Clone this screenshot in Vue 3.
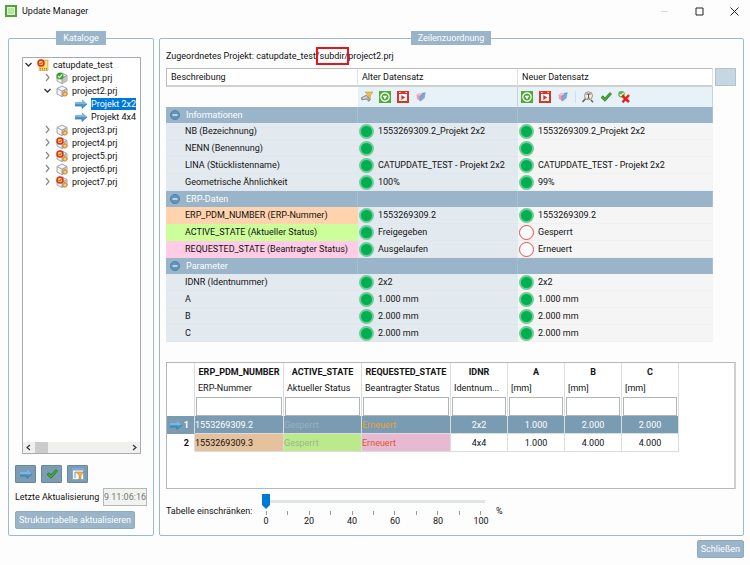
<script setup>
    import {ref} from "vue";

    const tree = ref([
        {name:"catupdate_test", icon:"catalog", level:0, state:"open"},
        {name:"project.prj", icon:"cube-ok", level:1, state:"closed"},
        {name:"project2.prj", icon:"cube-edit", level:1, state:"open"},
        {name:"Projekt 2x2", icon:"arrow", level:2},
        {name:"Projekt 4x4", icon:"arrow", level:2},
        {name:"project3.prj", icon:"cube-edit", level:1, state:"closed"},
        {name:"project4.prj", icon:"cube-error", level:1, state:"closed"},
        {name:"project5.prj", icon:"cube-error", level:1, state:"closed"},
        {name:"project6.prj", icon:"cube-edit", level:1, state:"closed"},
        {name:"project7.prj", icon:"cube-error", level:1, state:"closed"}
    ]);
    const selected = ref("Projekt 2x2");

    const oldTools = ["pen-filter", "target", "play", "cube-color"];
    const newTools = ["target", "play", "cube-color", "", "search", "check", "check-x"];

    const sections = ref([
        {title:"Informationen", open:true, rows:[
            {label:"NB (Bezeichnung)", old:"1553269309.2_Projekt 2x2", new:"1553269309.2_Projekt 2x2"},
            {label:"NENN (Benennung)", old:"", new:""},
            {label:"LINA (Stücklistenname)", old:"CATUPDATE_TEST - Projekt 2x2", new:"CATUPDATE_TEST - Projekt 2x2"},
            {label:"Geometrische Ähnlichkeit", old:"100%", new:"99%"}
        ]},
        {title:"ERP-Daten", open:true, rows:[
            {label:"ERP_PDM_NUMBER (ERP-Nummer)", old:"1553269309.2", new:"1553269309.2", color:"orange"},
            {label:"ACTIVE_STATE (Aktueller Status)", old:"Freigegeben", new:"Gesperrt", color:"green", changed:true},
            {label:"REQUESTED_STATE (Beantragter Status)", old:"Ausgelaufen", new:"Erneuert", color:"pink", changed:true}
        ]},
        {title:"Parameter", open:true, rows:[
            {label:"IDNR (Identnummer)", old:"2x2", new:"2x2"},
            {label:"A", old:"1.000 mm", new:"1.000 mm"},
            {label:"B", old:"2.000 mm", new:"2.000 mm"},
            {label:"C", old:"2.000 mm", new:"2.000 mm"}
        ]}
    ]);

    const columns = [
        {key:"erp", name:"ERP_PDM_NUMBER", sub:"ERP-Nummer"},
        {key:"active", name:"ACTIVE_STATE", sub:"Aktueller Status"},
        {key:"requested", name:"REQUESTED_STATE", sub:"Beantragter Status"},
        {key:"idnr", name:"IDNR", sub:"Identnum..."},
        {key:"a", name:"A", sub:"[mm]"},
        {key:"b", name:"B", sub:"[mm]"},
        {key:"c", name:"C", sub:"[mm]"}
    ];
    const records = [
        {erp:"1553269309.2", active:"Gesperrt", requested:"Erneuert", idnr:"2x2", a:"1.000", b:"2.000", c:"2.000"},
        {erp:"1553269309.3", active:"Gesperrt", requested:"Erneuert", idnr:"4x4", a:"1.000", b:"4.000", c:"4.000"}
    ];
    const filters = ref({});
    const current = ref(0);
    const limit = ref(0);
    const updated = ref("9 11:06:16");
</script>

<template>
    <svg class="symbols" aria-hidden="true">
        <symbol id="check" viewBox="0 0 12 12">
            <path d="M1 6.5 3 4.8 4.8 7 10 1.5 11.5 3 5 10.3z" fill="#3fae2a" stroke="#1d6b12" stroke-width=".7"/>
        </symbol>
        <symbol id="cube" viewBox="0 0 12 12">
            <path d="M6 1 11 3.5V9L6 11.6 1 9V3.5z" fill="#f4f4f4" stroke="#8d8d8d" stroke-width=".8"/>
            <path d="M6 6.2 11 3.5V9L6 11.6z" fill="#c3c3c3"/>
            <path d="M1 3.5 6 6.2 11 3.5M6 6.2v5.2" fill="none" stroke="#8d8d8d" stroke-width=".8"/>
        </symbol>
        <symbol id="gear" viewBox="0 0 12 12">
            <circle cx="6" cy="6" r="4.4" fill="#f3a73e" stroke="#cc7420" stroke-width="2" stroke-dasharray="1.8 1"/>
            <circle cx="6" cy="6" r="1.6" fill="#fff3d5"/>
        </symbol>
        <symbol id="error" viewBox="0 0 12 12">
            <circle cx="6" cy="6" r="4.5" fill="#f6d254" stroke="#d92c1a" stroke-width="2.2"/>
            <path d="m3.8 6 1.7 1.7L8.6 4" fill="none" stroke="#d92c1a" stroke-width="1.5"/>
        </symbol>
        <symbol id="cube-edit" viewBox="0 0 12 12">
            <use href="#cube"/>
            <use href="#gear" x="6" y="6" width="6" height="6"/>
        </symbol>
        <symbol id="cube-error" viewBox="0 0 12 12">
            <use href="#cube"/>
            <use href="#error" width="8" height="8"/>
            <use href="#gear" x="6" y="6" width="6" height="6"/>
        </symbol>
        <symbol id="cube-ok" viewBox="0 0 12 12">
            <use href="#cube"/>
            <circle cx="4" cy="4" r="3.6" fill="#35a32b"/>
            <path d="m2 4 1.5 1.6L6.2 2.4" fill="none" stroke="#fff" stroke-width="1.2"/>
        </symbol>
        <symbol id="catalog" viewBox="0 0 12 12">
            <path d="M2 1h9v10.5H2z" fill="#f3d26a" stroke="#d0a441" stroke-width=".6"/>
            <path d="M3 9.5h7M3 11h7" stroke="#9d7424" stroke-width=".8" stroke-dasharray="1 1"/>
            <use href="#error" width="8" height="8"/>
            <path d="M9 2v7" stroke="#fff0bd"/>
        </symbol>
        <symbol id="arrow" viewBox="0 0 12 12">
            <path d="M0 4h7V1.6L12 6l-5 4.4V8H0z" fill="#4f9acb"/>
            <path d="M0 4h7V1.6L12 6H0z" fill="#79b9dd"/>
            <path d="M0 8h7v2.4L12 6" fill="none" stroke="#2f6f9f" stroke-width=".7"/>
        </symbol>
        <symbol id="pen-filter" viewBox="0 0 12 12">
            <path d="M4 1h8L9.3 4.5V9l-2 1.5v-6z" fill="#f2bf4b" stroke="#bd8629" stroke-width=".5"/>
            <path d="m0 7 5.5-3L9 8.8 8 10 5 8 1 9z" fill="#b1b4b5" stroke="#686c6e" stroke-width=".6"/>
            <path d="m2 7.5 4-1.6" stroke="#eee" stroke-width=".8"/>
        </symbol>
        <symbol id="target" viewBox="0 0 12 12">
            <path d="M0 0h12v12H0z" fill="#51a838"/>
            <circle cx="6" cy="6" r="4.2" fill="none" stroke="#fff" stroke-width="1.2"/>
            <path d="M3.8 4.7h4.4L6 8.5z" fill="#fff"/>
        </symbol>
        <symbol id="play" viewBox="0 0 12 12">
            <path d="M0 0h12v12H0z" fill="#dc3326"/>
            <path d="M2 3h8v7H2z" fill="#fff"/>
            <path d="M4.3 4v5l4-2.5z" fill="#dc3326"/>
            <path d="M2 1.5h1.5M8.5 1.5H10" stroke="#fff"/>
        </symbol>
        <symbol id="cube-color" viewBox="0 0 12 12">
            <path d="m1.5 3.5 4-1.8 1.5 4L5.5 10 2 8z" fill="#ed9db1"/>
            <path d="m5 2.3 5.5-1L9.7 7 5.5 10.5z" fill="#81a5dd"/>
            <path d="m1.5 3.5 4-1.8L8 3.3 5 5z" fill="#f4c3ca"/>
            <path d="M5 5v5.3M5 5l5.3-3" stroke="#687ebb" stroke-width=".6"/>
        </symbol>
        <symbol id="search" viewBox="0 0 12 12">
            <circle cx="6.5" cy="4.8" r="4" fill="#eef0ed" stroke="#a88c72" stroke-width="1"/>
            <path d="M4.4 3h4.4M6.6 3v4M5.5 7.2h2.2" fill="none" stroke="#555" stroke-width="1"/>
            <path d="m3.5 7.7-3 3.3M9 9l2 2.2" stroke="#6c625a" stroke-width="1.6"/>
        </symbol>
        <symbol id="check-x" viewBox="0 0 12 12">
            <circle cx="3.5" cy="3.3" r="3.3" fill="#63b44b"/>
            <path d="m1.7 3.3 1.4 1.4 2.4-2.9" fill="none" stroke="#fff" stroke-width="1.1"/>
            <path d="m4 4.5 7 6.5M11 4l-6.5 7.3" stroke="#ed1c14" stroke-width="2.4"/>
        </symbol>
        <symbol id="window-filter" viewBox="0 0 12 12">
            <path d="M.5.5h11v11H.5z" fill="#f7f9fb" stroke="#8aa9cb"/>
            <path d="M.5.5h11v2H.5z" fill="#78a6de"/>
            <path d="M2 5h2M2 7h2M2 9h2" stroke="#6094d0"/>
            <path d="M3.5 4H12L9 7v3.5L7 12V7z" fill="#edb63e" stroke="#a8741f" stroke-width=".5"/>
        </symbol>
        <symbol id="logo" viewBox="0 0 12 12">
            <path d="M0 0h12v12H0z" fill="#4ca72e"/>
            <path d="M2 2h8v8H2z" fill="#e3f3da"/>
            <path d="M3 4h6M3 6h6M3 8h6" stroke="#83c169" stroke-width=".8"/>
        </symbol>
        <symbol id="minus" viewBox="0 0 12 12">
            <circle cx="6" cy="6" r="5.5" fill="#6094b8" stroke="#477fa6"/>
            <path d="M3 6h6" stroke="#e9f3f9" stroke-width="1.6"/>
        </symbol>
    </svg>

    <div class="window">
        <header class="titlebar">
            <svg class="icon"><use href="#logo"/></svg>
            <h1>Update Manager</h1>
            <div class="window-buttons">
                <button type="button" aria-label="Minimieren"><svg viewBox="0 0 9 9"><path d="M1 4.5h7" stroke="#d5ddd8"/></svg></button>
                <button type="button" aria-label="Maximieren"><svg viewBox="0 0 9 9"><path d="M1 1h7v7H1z" fill="none" stroke="#222"/></svg></button>
                <button type="button" aria-label="Fenster schließen"><svg viewBox="0 0 9 9"><path d="m.5.5 8 8m0-8-8 8" stroke="#222"/></svg></button>
            </div>
        </header>

        <main>
            <fieldset class="catalogs">
                <legend>Kataloge</legend>
                <div class="tree">
                    <ul>
                        <li v-for="node in tree" :key="node.name" :class="'level-' + node.level">
                            <span class="chevron">
                                <svg v-if="node.state == 'open'" viewBox="0 0 9 9"><path d="m1.5 3 3 3 3-3" fill="none" stroke="#333" stroke-width="1.3"/></svg>
                                <svg v-else-if="node.state" viewBox="0 0 9 9"><path d="m3 1 3 3.5L3 8" fill="none" stroke="#888" stroke-width="1.2"/></svg>
                            </span>
                            <svg class="icon"><use :href="'#' + node.icon"/></svg>
                            <button type="button" :class="{selected: selected == node.name}" @click="selected = node.name">{{ node.name }}</button>
                        </li>
                    </ul>
                    <div class="scrollbar">
                        <svg viewBox="0 0 9 9"><path d="m6 2-3 2.5L6 7" fill="none" stroke="#333" stroke-width="1.2"/></svg>
                        <span class="scroll-thumb"></span>
                        <svg viewBox="0 0 9 9"><path d="m3 2 3 2.5L3 7" fill="none" stroke="#333" stroke-width="1.2"/></svg>
                    </div>
                </div>
                <div class="actions">
                    <button type="button" aria-label="Zuordnen"><svg class="icon"><use href="#arrow"/></svg></button>
                    <button type="button" aria-label="Übernehmen"><svg class="icon"><use href="#check"/></svg></button>
                    <button type="button" aria-label="Filtern"><svg class="icon"><use href="#window-filter"/></svg></button>
                </div>
                <div class="updated">
                    <label for="updated">Letzte Aktualisierung</label>
                    <input id="updated" type="text" v-model="updated" readonly/>
                </div>
                <button type="button" class="button">Strukturtabelle aktualisieren</button>
            </fieldset>

            <fieldset class="mapping">
                <legend>Zeilenzuordnung</legend>
                <p class="project">Zugeordnetes Projekt: catupdate_test/<span class="marked">subdir</span>/project2.prj</p>

                <div class="compare-wrapper">
                    <table class="compare">
                        <colgroup>
                            <col class="col-label"/>
                            <col class="col-old"/>
                            <col/>
                        </colgroup>
                        <thead>
                            <tr>
                                <th>Beschreibung</th>
                                <th>Alter Datensatz</th>
                                <th>Neuer Datensatz</th>
                            </tr>
                            <tr class="tools">
                                <td></td>
                                <td v-for="(tools, i) in [oldTools, newTools]" :key="i">
                                    <div class="tool-list">
                                        <template v-for="tool in tools" :key="tool">
                                            <button type="button" v-if="tool" :aria-label="tool"><svg class="icon"><use :href="'#' + tool"/></svg></button>
                                            <span class="separator" v-else></span>
                                        </template>
                                    </div>
                                </td>
                            </tr>
                        </thead>
                        <tbody v-for="section in sections" :key="section.title">
                            <tr class="section">
                                <th>
                                    <button type="button" @click="section.open = !section.open">
                                        <svg><use href="#minus"/></svg>{{ section.title }}
                                    </button>
                                </th>
                                <td></td>
                                <td></td>
                            </tr>
                            <template v-if="section.open">
                                <tr v-for="row in section.rows" :key="row.label">
                                    <th :class="row.color">{{ row.label }}</th>
                                    <td><div class="value"><span class="dot"></span>{{ row.old }}</div></td>
                                    <td class="new"><div class="value"><span class="dot" :class="{changed: row.changed}"></span>{{ row.new }}</div></td>
                                </tr>
                            </template>
                        </tbody>
                    </table>
                    <button type="button" class="corner" aria-label="Spalten"></button>
                </div>

                <div class="records">
                    <table>
                        <colgroup>
                            <col class="col-number"/>
                            <col v-for="column in columns" :key="column.key" :class="'col-' + column.key"/>
                        </colgroup>
                        <thead>
                            <tr class="names">
                                <td></td>
                                <th v-for="column in columns" :key="column.key">{{ column.name }}</th>
                            </tr>
                            <tr class="subs">
                                <td></td>
                                <td v-for="column in columns" :key="column.key">{{ column.sub }}</td>
                            </tr>
                            <tr class="filters">
                                <td></td>
                                <td v-for="column in columns" :key="column.key"><input type="text" :aria-label="column.name" v-model="filters[column.key]"/></td>
                            </tr>
                        </thead>
                        <tbody>
                            <tr v-for="(record, i) in records" :key="record.erp" :class="{current: current == i}" @click="current = i">
                                <th>
                                    <div class="number"><svg class="icon" v-if="current == i"><use href="#arrow"/></svg>{{ i + 1 }}</div>
                                </th>
                                <td v-for="column in columns" :key="column.key" :class="column.key">{{ record[column.key] }}</td>
                            </tr>
                        </tbody>
                    </table>
                </div>

                <div class="limit">
                    <label for="limit">Tabelle einschränken:</label>
                    <div class="slider">
                        <input id="limit" type="range" min="0" max="100" v-model="limit"/>
                        <div class="ticks"><i v-for="n in 11" :key="n"></i></div>
                        <div class="scale"><span v-for="n in 6" :key="n">{{ (n - 1) * 20 }}</span></div>
                    </div>
                    <span>%</span>
                </div>
            </fieldset>
        </main>

        <footer>
            <button type="button" class="button">Schließen</button>
        </footer>
    </div>
</template>

<style>
    body{
        margin:0;
        background:#fdfdfd;
    }
</style>

<style scoped>
    *{
        box-sizing:border-box;
    }
    .symbols{
        position:absolute;
        width:0;
        height:0;
    }
    .window{
        display:flex;
        flex-direction:column;
        min-height:100vh;
        padding:0 6px 7px 8px;
        font-family:Roboto, "Open Sans", sans-serif;
        font-size:9px;
        line-height:14px;
        color:#111;
    }
    button, input{
        font:inherit;
        color:inherit;
        margin:0;
        padding:0;
        border:0;
        background:none;
    }
    svg{
        display:block;
        flex:none;
    }
    .icon{
        width:12px;
        height:12px;
    }
    .titlebar{
        display:flex;
        align-items:center;
        height:22px;
        margin:0 0 9px -3px;
    }
    h1{
        flex:1;
        margin:0 0 0 5px;
        font-size:9px;
        font-weight:normal;
    }
    .window-buttons{
        display:flex;
        gap:26px;
        padding-right:5px;
    }
    .window-buttons button, .window-buttons svg{
        width:9px;
        height:9px;
    }
    main{
        display:flex;
        flex:1;
        gap:5px;
    }
    fieldset{
        display:flex;
        flex-direction:column;
        min-width:0;
        margin:0;
        border:1px solid #9db9cc;
        border-radius:2px;
    }
    legend{
        margin:0 auto;
        padding:0 7px;
        background:#9ab4c9;
        color:#fff;
    }
    .catalogs{
        flex:0 0 146px;
        padding:12px 6px 6px;
    }
    .mapping{
        flex:1;
        padding:2px 7px 7px 6px;
    }
    .tree{
        display:flex;
        flex-direction:column;
        flex:1;
        margin:0 6px 11px 7px;
        border:1px solid #a5abb0;
        background:#fff;
    }
    ul{
        flex:1;
        margin:0;
        padding:0;
        list-style:none;
    }
    li{
        display:flex;
        align-items:center;
        gap:4px;
        height:13px;
        padding-left:1px;
    }
    li button{
        line-height:12px;
        white-space:nowrap;
    }
    .level-1{
        padding-left:20px;
    }
    .level-2{
        padding-left:39px;
    }
    .selected{
        background:#0078d7;
        color:#fff;
    }
    .chevron, .chevron svg{
        width:9px;
        height:9px;
    }
    .scrollbar{
        display:flex;
        align-items:center;
        gap:2px;
        height:11px;
        padding:0 1px;
        background:#f0f1ee;
    }
    .scrollbar svg{
        width:9px;
        height:9px;
    }
    .scroll-thumb{
        width:13px;
        height:11px;
        margin-right:auto;
        background:#cbcbcb;
    }
    .actions{
        display:flex;
        gap:5px;
    }
    .actions button{
        display:flex;
        align-items:center;
        justify-content:center;
        width:21px;
        height:18px;
        border:1px solid #6789a0;
        border-radius:1px;
        background:#7b9cb2;
    }
    .updated{
        display:flex;
        align-items:center;
        justify-content:space-between;
        margin:5px 0;
        white-space:nowrap;
    }
    .updated input{
        width:44px;
        height:18px;
        border:1px solid #b4b8b8;
        background:#f1f3f0;
        color:#777;
    }
    .button{
        align-self:flex-start;
        height:18px;
        padding:0 3px;
        border:1px solid #8faabf;
        border-radius:2px;
        background:#9ab4c9;
        color:#fff;
        white-space:nowrap;
    }
    .project{
        margin:0 0 3px;
        line-height:18px;
    }
    .marked{
        position:relative;
    }
    .marked::after{
        content:"";
        position:absolute;
        inset:-4px;
        border:2px solid #e8141c;
    }
    table{
        border-collapse:separate;
        border-spacing:0;
        table-layout:fixed;
    }
    th, td{
        padding:0;
        font-weight:normal;
        text-align:left;
        white-space:nowrap;
    }
    .compare-wrapper{
        display:flex;
        align-items:flex-start;
        gap:2px;
        margin-bottom:20px;
    }
    .compare{
        flex:1;
        min-width:0;
        width:0;
    }
    .col-label{
        width:192px;
    }
    .col-old{
        width:160px;
    }
    .compare thead th{
        height:19px;
        padding-left:4px;
        border:1px solid #b8bcbd;
        border-width:1px 1px 2px 0;
        border-right-color:#dde2e4;
        border-bottom-color:#cfd1d1;
        background:#fff;
    }
    .compare thead th:first-child{
        border-left-width:1px;
    }
    .tools td{
        height:20px;
    }
    .tools td + td{
        border-right:1px solid #c9d3d8;
        background:#e6f2f7;
    }
    .tool-list{
        display:flex;
        align-items:center;
        gap:6px;
        padding-left:3px;
    }
    .separator{
        width:1px;
        height:12px;
        background:#d5dfe3;
    }
    .compare tbody th, .compare tbody td{
        height:17px;
        border-bottom:1px solid #dfe7ec;
        background:#e3eaef;
    }
    .compare tbody th{
        padding-left:19px;
    }
    .compare tbody .new{
        border-bottom-color:#eef1ee;
        background:#f4f5f4;
    }
    .compare .section th, .compare .section td{
        height:16px;
        border:0;
        border-right:1px solid #a8bfd0;
        background:#9ab4c9;
    }
    .compare .section th{
        padding-left:4px;
    }
    .section button{
        display:flex;
        align-items:center;
        gap:6px;
        color:#fff;
    }
    .section svg{
        width:10px;
        height:10px;
    }
    .compare tbody .orange{
        border-color:#ffd3ae;
        background:#ffd3ae;
    }
    .compare tbody .green{
        border-color:#ccff99;
        background:#ccff99;
    }
    .compare tbody .pink{
        border-color:#ffcce6;
        background:#ffcce6;
    }
    .value{
        display:flex;
        align-items:center;
        gap:4px;
        padding-left:1px;
    }
    .dot{
        width:15px;
        height:15px;
        border:2px solid #6fcb98;
        border-radius:50%;
        background:#00b050;
    }
    .dot.changed{
        border:1px solid #f04848;
        background:#fff;
    }
    .corner{
        width:21px;
        height:18px;
        border:1px solid #b5c1c9;
        background:#c5d7e2;
    }
    .records{
        min-height:127px;
        margin-bottom:5px;
        border:1px solid #b5b8ba;
        border-right:2px solid #cfd1d1;
        background:#fff;
    }
    .records th, .records td{
        border-right:1px solid #d9dddd;
    }
    .col-number{
        width:28px;
    }
    .col-erp, .col-requested{
        width:89px;
    }
    .col-active{
        width:78px;
    }
    .col-idnr, .col-a, .col-b, .col-c{
        width:57px;
    }
    .records table{
        width:512px;
    }
    .names th{
        height:17px;
        font-weight:bold;
        text-align:center;
    }
    .subs td{
        height:16px;
        padding:0 3px;
    }
    .filters td{
        height:20px;
        padding:0 1px;
    }
    .filters input{
        display:block;
        width:100%;
        height:19px;
        border:1px solid #b2b5b5;
    }
    .records tbody th, .records tbody td{
        height:18px;
        border-bottom:1px solid #d9dddd;
    }
    .records tbody th{
        border-bottom-color:transparent;
        font-weight:bold;
    }
    .number{
        display:flex;
        align-items:center;
        justify-content:flex-end;
        gap:2px;
        padding-right:5px;
    }
    .idnr, .a, .b, .c{
        text-align:center;
    }
    .erp{
        background:#e6c19d;
    }
    .active{
        background:#bbea8b;
        color:#9fb48c;
    }
    .requested{
        background:#e8b9d3;
        color:#dc5a28;
    }
    .current th, .current td{
        background:#7a9cb2;
        color:#fff;
    }
    .current .active{
        color:#9db0bc;
    }
    .current .requested{
        color:#eda02c;
    }
    .limit{
        display:flex;
        align-items:center;
    }
    .limit label{
        width:96px;
    }
    .slider{
        width:223px;
        margin-right:11px;
    }
    .slider input{
        display:block;
        width:100%;
        height:15px;
        appearance:none;
    }
    .slider input::-webkit-slider-runnable-track{
        height:3px;
        background:#e0e4e4;
    }
    .slider input::-webkit-slider-thumb{
        width:8px;
        height:15px;
        margin-top:-6px;
        appearance:none;
        background:#0078d7;
        clip-path:polygon(0 0, 100% 0, 100% 73%, 50% 100%, 0 73%);
    }
    .ticks{
        display:flex;
        justify-content:space-between;
        margin:2px 4px 0;
    }
    .ticks i{
        width:1px;
        height:4px;
        background:#999;
    }
    .scale{
        display:flex;
        justify-content:space-between;
        margin:0 -6px;
        line-height:12px;
    }
    .scale span{
        width:20px;
        text-align:center;
    }
    footer{
        display:flex;
        justify-content:flex-end;
        margin-top:4px;
    }
</style>
